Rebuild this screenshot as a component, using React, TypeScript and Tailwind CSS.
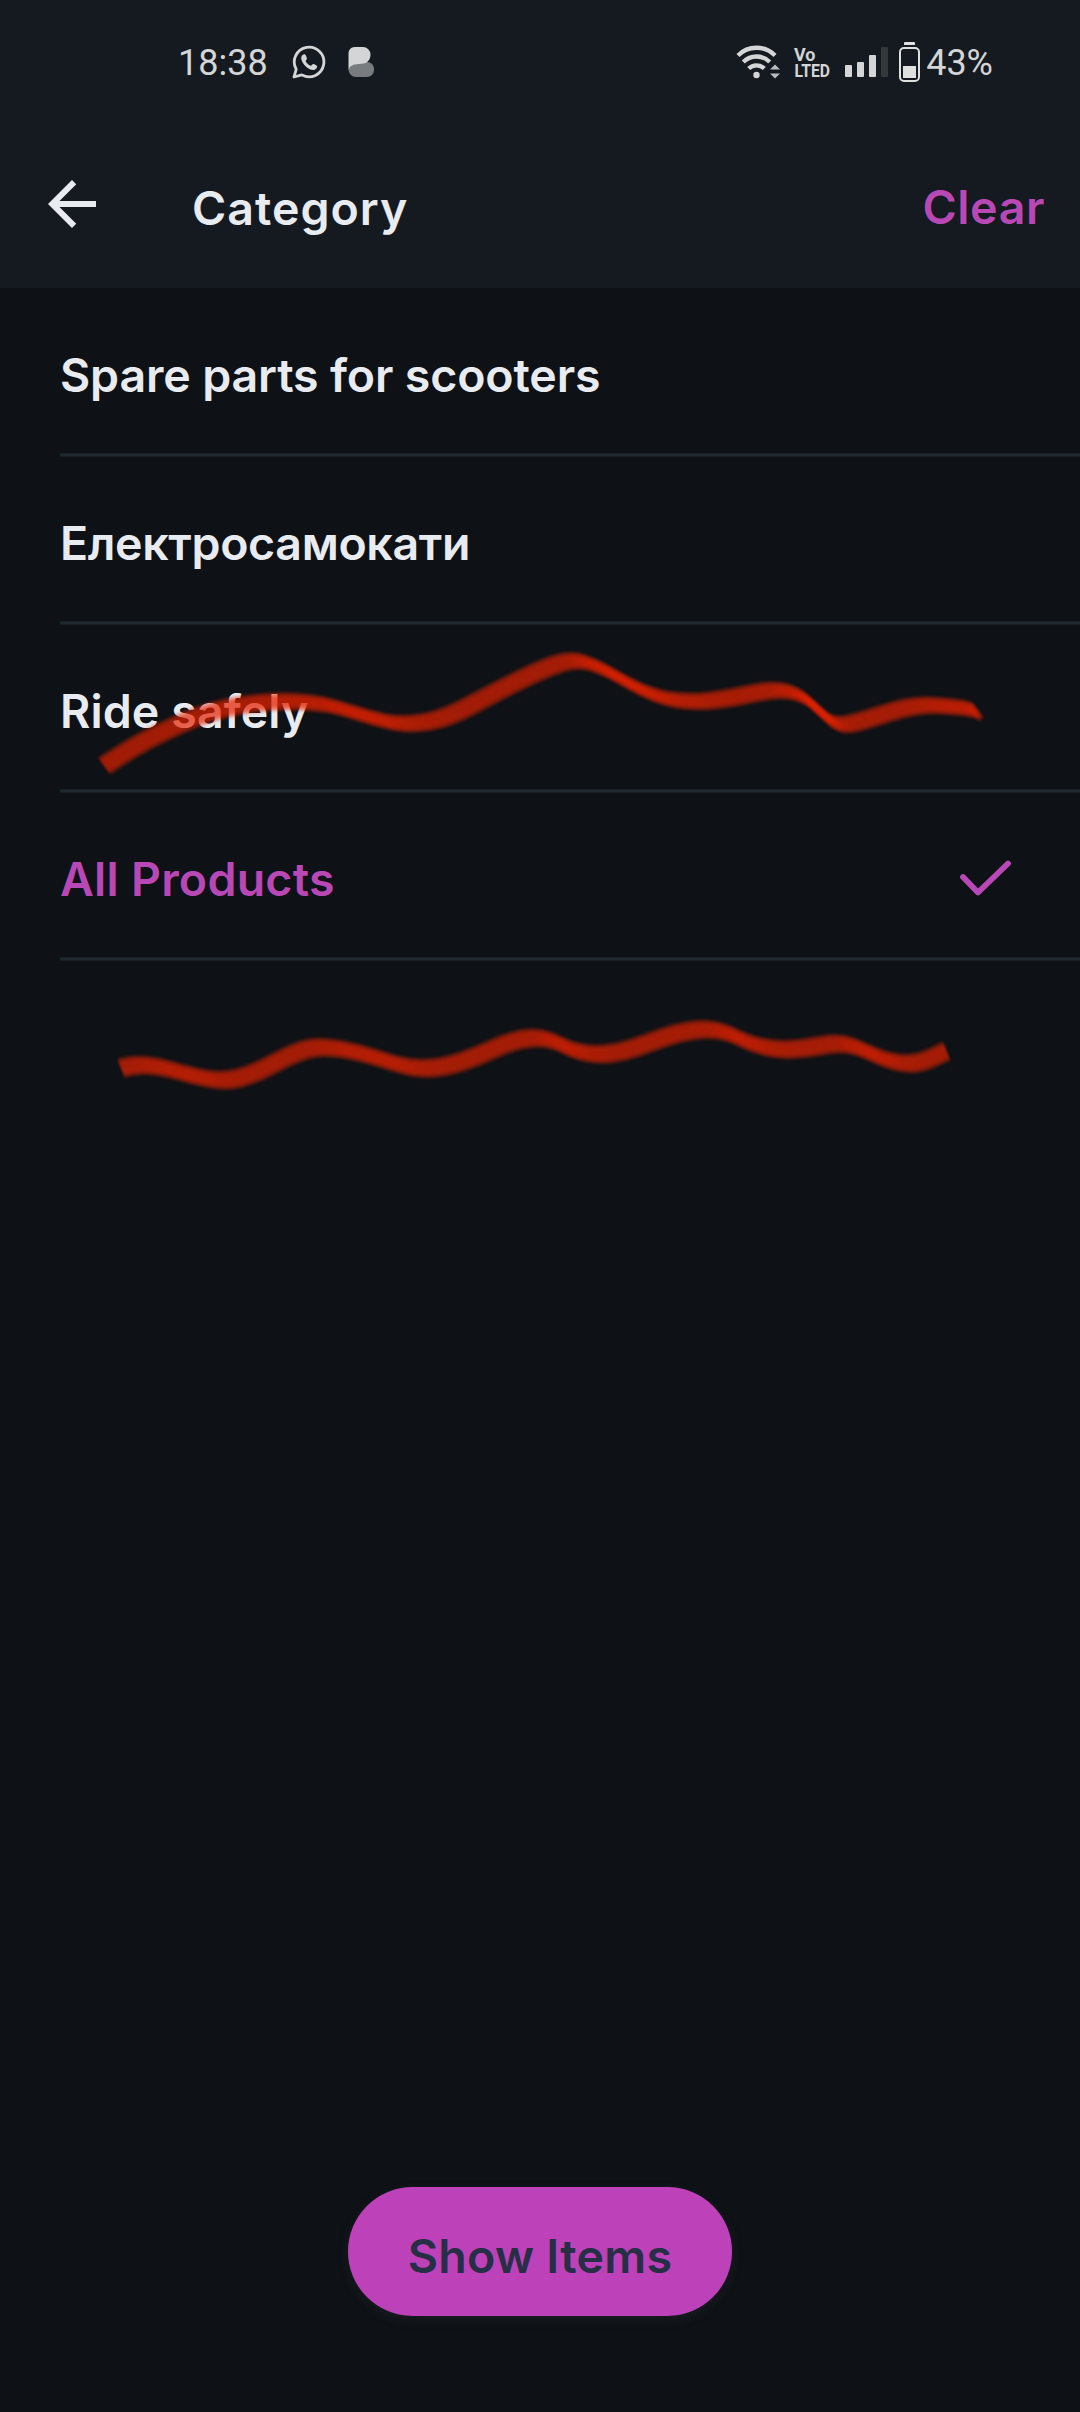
type Point = [number, number];

const categories = [
  { label: 'Spare parts for scooters', spacing: 'tracking-[-0.15px]' },
  { label: 'Електросамокати', spacing: 'tracking-[-0.35px]' },
  { label: 'Ride safely', spacing: 'tracking-[0.1px]' },
  { label: 'All Products', spacing: 'tracking-[0.25px]', selected: true },
];

// Points along the lower edge of each brush stroke.
const upperStroke: Point[] = [
  [110.6, 775], [134, 759.5], [160.5, 745], [205, 724.5], [240, 715], [281, 710], [315.5, 711], [342, 715.5],
  [377.5, 727], [412, 734.5], [453, 727.5], [498, 703], [549.6, 677.5], [581, 667.5], [609, 677], [643, 697],
  [671, 708], [703, 711.3], [733, 707.8], [760.4, 702], [786, 698.2], [808.6, 704], [826, 720], [840, 732.5],
  [853, 734], [875, 728], [905, 718.3], [929, 713.8], [953, 715], [971, 717], [980, 719], [984, 722],
];

const lowerStroke: Point[] = [
  [125, 1078.3], [138, 1074], [166.7, 1077], [193, 1085], [228, 1092], [258, 1084], [288, 1068], [312, 1058],
  [334, 1057], [366.7, 1063.3], [396.7, 1073], [420, 1079], [450, 1077], [483, 1065.7], [510, 1053],
  [536, 1047], [556, 1050], [576.7, 1060.5], [600, 1065], [626.7, 1062], [653, 1052.7], [682, 1042.5], [710, 1038.5],
  [732, 1042.5], [753, 1053.3], [780, 1060], [808, 1058.8], [838, 1053], [858, 1055.5], [886.7, 1069], [908, 1074],
  [926, 1072.5], [950.7, 1061],
];

// Quadratic B-spline: each point is a control handle, joined at the midpoints.
function spline(points: Point[]) {
  const last = points.length - 1;
  let d = `M${points[0][0]} ${points[0][1]}`;
  for (let i = 1; i < last; i++) {
    const [x, y] = points[i];
    const [nx, ny] = points[i + 1];
    d += `Q${x} ${y} ${(x + nx) / 2} ${(y + ny) / 2}`;
  }
  return `${d}L${points[last][0]} ${points[last][1]}`;
}

// A slanted-nib brush: translucent bristles spread along the nib vector.
function Brush({ points, nib }: { points: Point[]; nib: Point }) {
  const d = spline(points);
  const bristles = 18;
  return (
    <g className="blur-[0.8px]" fill="none" stroke="#e62400" strokeWidth="6.500" strokeOpacity="0.16">
      {Array.from({ length: bristles }, (_, i) => {
        const t = 0.13 + (0.74 * i) / (bristles - 1);
        return <path key={i} d={d} transform={`translate(${-nib[0] * t} ${-nib[1] * t})`} />;
      })}
    </g>
  );
}

function StatusBar() {
  return (
    <div className="flex h-[124px] items-center pl-[178px] pr-[88px] font-['Roboto',sans-serif] text-[36px] font-normal leading-none text-[#d3d5d6]">
      <span className="mt-[2px]">18:38</span>
      <svg className="ml-[24px] h-[34px] w-[34px]" viewBox="0 0 34 34" fill="none">
        <path d="M2 32 4.2 24.3A14.8 14.8 0 1 1 9.8 29.9Z" stroke="currentColor" strokeWidth="2.8" strokeLinejoin="round" />
        <path d="M9.200 12.500c.500-2.600 2.800-3.600 3.900-3 .900.700 1.500 2.700 1.800 3.900.200 1-1.200 1.700-1.300 2.500.800 2.100 2.900 3.900 5.100 4.800 1 0 1.500-1.800 2.500-1.800 1.300.300 3.300 1.200 3.900 2 .400 2.200-1.800 4-4 4.100C15.800 24.900 9 18 9.200 12.500Z" fill="currentColor" />
      </svg>
      <svg className="ml-[22px] h-[32px] w-[27px]" viewBox="0 0 27 32">
        <path d="M6 16h13.500a6.500 6.500 0 0 1 6.500 6.500v1.500a7 7 0 0 1-7 7H8a7.500 7.500 0 0 1-7.500-7.500Z" fill="#797c7e" />
        <path d="M.5 24V7A6 6 0 0 1 6.500 1H15a7.500 7.500 0 0 1 7.500 7.500c0 5-3 8.500-7 9C9 18.200 3 17.500.5 24Z" fill="#d3d5d6" />
      </svg>

      <svg className="ml-auto h-[36px] w-[46px]" viewBox="0 0 46 36" fill="none">
        <g stroke="currentColor" strokeWidth="4.300">
          <path d="M2 11.500a26 26 0 0 1 37 0" />
          <path d="M7.300 18a18.600 18.600 0 0 1 26.400 0" />
          <path d="M12.700 24.600a11 11 0 0 1 15.600 0" />
        </g>
        <circle cx="20.500" cy="31" r="3.200" fill="currentColor" />
        <path d="M34 25.500 39 20.500 44 25.500ZM34 29.500 39 34.500 44 29.500Z" fill="#b9bcbd" />
      </svg>
      <svg className="ml-[12px] h-[34px] w-[37px] overflow-visible font-['Roboto',sans-serif] font-bold" viewBox="0 0 37 34" fill="currentColor">
        <text x="0" y="16" fontSize="19" textLength="21.500" lengthAdjust="spacingAndGlyphs">Vo</text>
        <text x="0.500" y="32" fontSize="19" textLength="35.500" lengthAdjust="spacingAndGlyphs">LTED</text>
      </svg>
      <div className="ml-[14px] flex h-[30px] items-end gap-[5px]">
        <i className="h-[12px] w-[7px] rounded-[1px] bg-[#d3d5d6]" />
        <i className="h-[15px] w-[7px] rounded-[1px] bg-[#d3d5d6]" />
        <i className="h-[22px] w-[7px] rounded-[1px] bg-[#d3d5d6]" />
        <i className="h-[30px] w-[7px] rounded-[1px] bg-[#33383b]" />
      </div>
      <div className="ml-[11px] flex flex-col items-center">
        <div className="mb-[2px] h-[3px] w-[11px] rounded-t-[1px] bg-[#dfe1e1]" />
        <div className="flex h-[35px] w-[21px] items-end rounded-[5px] border-[2px] border-[#dfe1e1] p-[2px]">
          <div className="h-[12px] w-full bg-[#dfe1e1]" />
        </div>
      </div>
      <span className="ml-[6px] mr-[-1px] mt-[2px]">43%</span>
    </div>
  );
}

export default function App() {
  return (
    <div className="relative flex h-[2412px] w-[1080px] flex-col overflow-hidden bg-[#0e1115] font-['Inter',sans-serif] text-[46.5px] font-semibold leading-none text-[#e8ebf0]">
      <header className="h-[288px] shrink-0 bg-[#151a20]">
        <StatusBar />
        <div className="flex h-[164px] items-start pl-[36px] pr-[35px] pt-[44px]">
          <svg className="h-[72px] w-[72px]" viewBox="0 0 24 24" fill="currentColor">
            <path d="M20 11H7.830l5.590-5.590L12 4l-8 8 8 8 1.410-1.410L7.830 13H20v-2z" />
          </svg>
          <h1 className="ml-[84px] mt-[17px] tracking-[1px]">Category</h1>
          <button className="ml-auto mt-[16px] tracking-[0.6px] text-[#b848b5]">Clear</button>
        </div>
      </header>

      <ul className="flex flex-col pl-[60px] pt-px">
        {categories.map(({ label, spacing, selected }) => (
          <li key={label} className={`flex h-[168px] flex-col ${selected ? 'text-[#b848b5]' : ''}`}>
            <div className="flex flex-1 items-center pr-[66px]">
              <span className={`mt-[8px] whitespace-nowrap ${spacing}`}>{label}</span>
              {selected && (
                <svg className="ml-auto mt-[7px] h-[40px] w-[57px]" viewBox="0 0 57 40" fill="none">
                  <path d="M6 18 21 33.500 51 4.500" stroke="currentColor" strokeWidth="5.800" strokeLinecap="round" strokeLinejoin="round" />
                </svg>
              )}
            </div>
            <div className="h-[4px] border-y border-[#171e22] bg-[#1f2930]" />
          </li>
        ))}
      </ul>

      <button className="mx-auto mb-[96px] mt-auto h-[129px] w-[384px] rounded-full bg-[#bd41b8] pt-[10px] tracking-[0.3px] text-[#262f45] shadow-[0_4px_12px_rgba(70,85,90,0.18)]">
        Show Items
      </button>

      <svg className="pointer-events-none absolute left-0 top-0 h-[2412px] w-[1080px]" viewBox="0 0 1080 2412">
        <Brush points={upperStroke} nib={[13, 18]} />
        <Brush points={lowerStroke} nib={[8, 20]} />
      </svg>
    </div>
  );
}
